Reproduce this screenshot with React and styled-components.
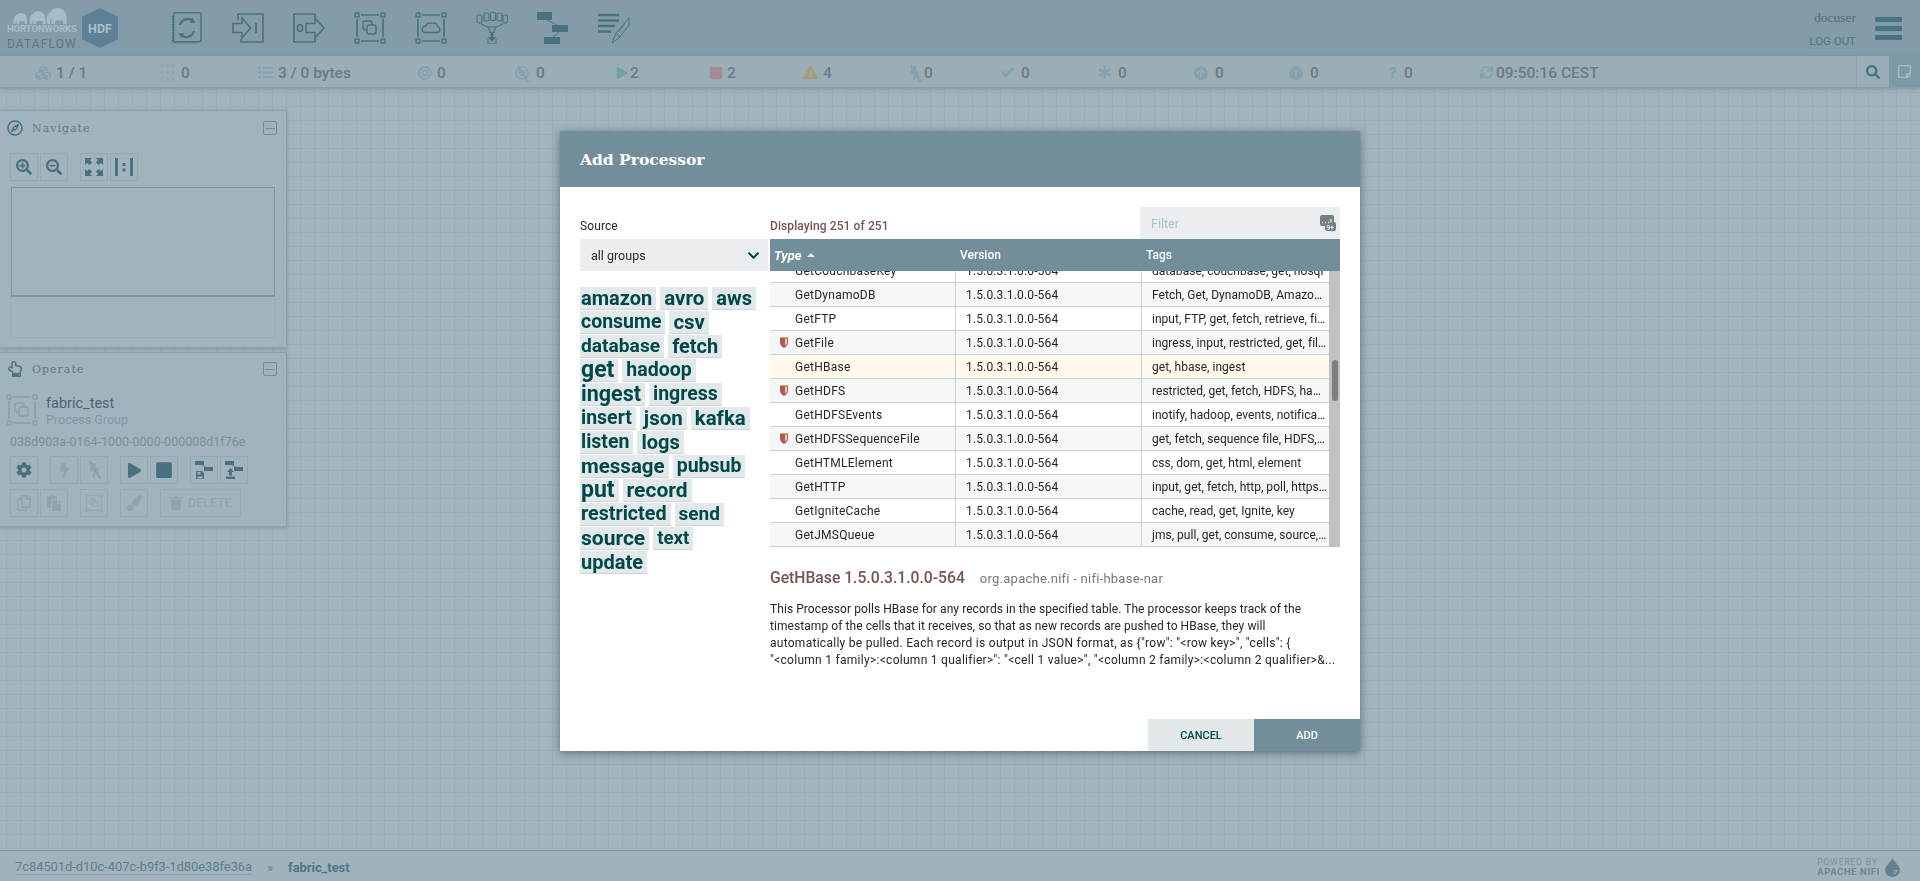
import React from "react";
import styled, { createGlobalStyle } from "styled-components";
import {
  FaCubes, FaList, FaBullseye, FaPlay, FaStop, FaExclamationTriangle, FaBolt, FaCheck, FaAsterisk,
  FaArrowCircleUp, FaExclamationCircle, FaQuestion, FaSync, FaSearch, FaCog, FaPaintBrush, FaTrash,
  FaRegCopy, FaPaste, FaSearchPlus, FaSearchMinus, FaRegCompass, FaRegHandPointUp, FaChevronDown,
  FaRegStickyNote,
} from "react-icons/fa";

const Global = createGlobalStyle`
  html, body { margin: 0; padding: 0; height: 100%; overflow: hidden; }
  body { font-family: Roboto, "Liberation Sans", sans-serif; background: #a2b4be; }
  * { box-sizing: border-box; }
`;

const Page = styled.div`
  height: 881px;
  display: flex;
  flex-direction: column;
`;

/* top header */
const Header = styled.header`
  height: 56px;
  background: #849ca9;
  display: flex;
  align-items: center;
  padding: 0 18px 0 7px;
  flex-shrink: 0;
`;
const Logo = styled.div`
  width: 164px;
  height: 56px;
  display: flex;
  gap: 7px;
  align-items: center;
`;
const LogoWords = styled.div`
  width: 68px;
  display: flex;
  flex-direction: column;
  align-items: flex-start;
  padding-top: 2px;
`;
const Hortonworks = styled.span`
  font-size: 9.5px;
  line-height: 10px;
  font-weight: 700;
  color: #a9bcc6;
  letter-spacing: -0.1px;
  white-space: nowrap;
`;
const Dataflow = styled.span`
  font-size: 12px;
  line-height: 14px;
  margin-top: 3px;
  color: #5f7684;
  letter-spacing: 1.1px;
`;
const ToolIcons = styled.div`
  display: flex;
  gap: 29px;
  color: #49727e;
  flex: 1;
`;
const ToolIcon = styled.svg`
  width: 32px;
  height: 32px;
  display: block;
`;
const UserBox = styled.div`
  display: flex;
  flex-direction: column;
  align-items: flex-end;
  margin-right: 19px;
  margin-top: 2px;
`;
const UserName = styled.span`
  font-family: "Liberation Serif", serif;
  font-size: 13.5px;
  line-height: 16px;
  color: #5a6d78;
`;
const LogOut = styled.span`
  font-size: 11.5px;
  line-height: 14px;
  margin-top: 8px;
  color: #4f7682;
  border-bottom: 1px solid #7d97a3;
`;
const Burger = styled.div`
  width: 27px;
  height: 23px;
  display: flex;
  flex-direction: column;
  justify-content: space-between;
  span {
    display: block;
    height: 5px;
    border-radius: 1px;
    background: #49727e;
  }
`;

/* status bar */
const StatusBar = styled.div`
  height: 32px;
  background: #9aaeb8;
  border-bottom: 1px solid #879eaa;
  box-shadow: 0 1px 4px rgba(60, 85, 100, 0.3);
  display: flex;
  align-items: center;
  padding-left: 35px;
  flex-shrink: 0;
  position: relative;
  z-index: 1;
`;
const Stat = styled.div`
  width: ${(p) => p.$w}px;
  display: flex;
  align-items: center;
  padding-top: 2px;
  font-size: 15.5px;
  font-weight: 500;
  color: #6d7a85;
  white-space: nowrap;
`;
const StatIcon = styled.span`
  width: ${(p) => p.$w}px;
  display: flex;
  color: ${(p) => p.$color || "#86a0ad"};
  position: relative;
  font-size: ${(p) => p.$size || 15}px;
`;
const Slash = styled.i`
  position: absolute;
  left: ${(p) => p.$left || 7}px;
  top: ${(p) => p.$top || -2}px;
  width: 1.5px;
  height: 20px;
  background: #86a0ad;
  transform: rotate(-32deg);
`;
const StatusRight = styled.div`
  margin-left: auto;
  height: 31px;
  display: flex;
`;
const SearchBtn = styled.div`
  width: 33px;
  border-left: 1px solid #8ba2ae;
  display: flex;
  align-items: center;
  justify-content: center;
  color: #49727e;
  font-size: 14px;
`;
const NoteBtn = styled.div`
  width: 31px;
  background: #7f98a5;
  display: flex;
  align-items: center;
  justify-content: center;
  color: #a8bac4;
  font-size: 15px;
`;

/* canvas with the floating palettes */
const Canvas = styled.main`
  flex: 1;
  background-color: #a2b4be;
  background-image:
    linear-gradient(#9aadb7 1px, transparent 1px),
    linear-gradient(90deg, #9aadb7 1px, transparent 1px);
  background-size: 14px 14px;
  background-position: 6px 4px;
  padding-top: 22px;
  display: flex;
  flex-direction: column;
  gap: 4px;
`;
const Palette = styled.section`
  width: 287px;
  height: ${(p) => p.$h}px;
  background: #a1b3bd;
  border: 1px solid #8ba2ae;
  border-left: 0;
  box-shadow: 0 1px 3px rgba(60, 85, 100, 0.3);
  padding: 0 10px;
`;
const PaletteHead = styled.div`
  height: ${(p) => p.$h}px;
  margin: 0 -1px ${(p) => 42 - p.$h}px -3px;
  display: flex;
  align-items: center;
  color: #4b7480;
  font-size: 16px;
`;
const PaletteTitle = styled.span`
  font-family: "DejaVu Serif", serif;
  font-size: 11px;
  letter-spacing: 1px;
  color: #65798a;
  margin-left: 9px;
  flex: 1;
`;
const Collapse = styled.span`
  width: 14px;
  height: 14px;
  border: 1px solid #6f8e9c;
  border-radius: 2px;
  display: flex;
  align-items: center;
  justify-content: center;
  &::after {
    content: "";
    width: 10px;
    height: 1px;
    background: #6f8e9c;
  }
`;
const BtnRow = styled.div`
  display: flex;
  gap: 12px;
  margin-top: ${(p) => p.$mt || 0}px;
`;
const BtnGroup = styled.div`
  display: flex;
  gap: 2px;
`;
const CtlBtn = styled.div`
  min-width: 28px;
  height: 28px;
  padding: ${(p) => (p.$wide ? "0 8px" : "0")};
  border: 1px solid #94a9b4;
  display: flex;
  align-items: center;
  justify-content: center;
  gap: 5px;
  position: relative;
  color: ${(p) => (p.$off ? "#8ea4af" : "#49727e")};
  font-size: ${(p) => p.$size || 15}px;
`;
const DeleteLabel = styled.span`
  font-size: 12px;
  color: #8ea4af;
  letter-spacing: 0.3px;
`;
const BirdsEye = styled.div`
  width: 264px;
  height: 110px;
  margin: 6px 0 0 1px;
  border: 1px solid #7b98a6;
  border-bottom-width: 2px;
`;
const BirdsFoot = styled.div`
  width: 266px;
  height: 41px;
  border: 1px solid #99adb7;
  border-top: 0;
`;
const Selection = styled.div`
  display: flex;
  gap: 8px;
  margin: -1px 0 0 -4px;
  color: #8f9ea7;
`;
const SelectionName = styled.div`
  font-size: 14.5px;
  line-height: 16px;
  margin-top: 2px;
  color: #4f6472;
`;
const SelectionType = styled.div`
  font-size: 12.5px;
  line-height: 16px;
  color: #7f98a5;
`;
const SelectionId = styled.div`
  font-size: 12.5px;
  line-height: 16px;
  margin: 6px 0 6px;
  color: #7d8f9a;
  white-space: nowrap;
`;

/* footer */
const Footer = styled.footer`
  height: 31px;
  background: #a0b3bd;
  border-top: 1px solid #859da9;
  display: flex;
  align-items: center;
  padding: 2px 20px 0 15px;
  font-size: 12.85px;
  color: #4f7682;
  flex-shrink: 0;
`;
const Crumb = styled.span`
  border-bottom: 1px solid #8ba2ae;
  color: #5c7f8b;
`;
const CrumbSep = styled.span`
  margin: 0 15px;
  color: #5c7f8b;
`;
const CrumbNow = styled.b`
  font-weight: 700;
  color: #4f7682;
`;
const Powered = styled.div`
  margin-left: auto;
  display: flex;
  align-items: center;
  gap: 5px;
  color: #7d909b;
`;
const PoweredText = styled.div`
  font-size: 8.5px;
  line-height: 9px;
  letter-spacing: 0.9px;
  white-space: nowrap;
  b {
    display: block;
    font-size: 9.5px;
    letter-spacing: 0.6px;
    color: #73858f;
  }
`;

/* dialog */
const Glass = styled.div`
  position: fixed;
  inset: 0;
  z-index: 5;
  display: flex;
  align-items: center;
  justify-content: center;
`;
const Dialog = styled.div`
  width: 800px;
  height: 620px;
  background: #fff;
  box-shadow: 0 2px 8px rgba(30, 50, 60, 0.55);
  display: flex;
  flex-direction: column;
`;
const DialogHead = styled.div`
  height: 56px;
  background: #728e9b;
  color: #fff;
  font-family: "DejaVu Serif", serif;
  font-weight: 700;
  font-size: 15.5px;
  display: flex;
  align-items: center;
  padding: 2px 0 0 20px;
  flex-shrink: 0;
`;
const DialogBody = styled.div`
  flex: 1;
  display: flex;
  gap: 2px;
  padding: 20px 20px 0;
`;
const LeftCol = styled.div`
  width: 188px;
`;
const SourceLabel = styled.div`
  height: 32px;
  display: flex;
  align-items: flex-end;
  padding-bottom: 6px;
  font-size: 12px;
  letter-spacing: 0.1px;
  color: #262626;
`;
const SelectBox = styled.div`
  height: 32px;
  background: #eaeef0;
  display: flex;
  align-items: center;
  justify-content: space-between;
  padding: 1px 8px 0 11px;
  font-size: 12.5px;
  color: #262626;
  svg { color: #004849; font-size: 13px; }
`;
const Cloud = styled.div`
  margin-top: 16px;
  height: 287px;
  overflow: hidden;
`;
const CloudRow = styled.div`
  height: 24px;
  display: flex;
  gap: 4px;
  align-items: flex-start;
`;
const Tag = styled.span`
  height: 23px;
  padding: 0 4px;
  background: #e3e8eb;
  border-bottom: 1px solid #ccd5da;
  color: #004849;
  font-weight: 700;
  font-size: ${(p) => p.$size}px;
  line-height: 22px;
  white-space: nowrap;
  &:first-child { padding-left: 1px; }
`;
const RightCol = styled.div`
  width: 570px;
`;
const TopLine = styled.div`
  height: 32px;
  display: flex;
  justify-content: space-between;
`;
const Displaying = styled.div`
  align-self: flex-end;
  padding-bottom: 6px;
  font-size: 12px;
  font-weight: 500;
  letter-spacing: 0.1px;
  color: #775351;
`;
const Filter = styled.div`
  width: 200px;
  background: #eaeef0;
  display: flex;
  align-items: center;
  justify-content: space-between;
  padding: 1px 4px 0 11px;
  font-size: 12.5px;
  color: #b2c1c8;
`;
const HeadRow = styled.div`
  height: 32px;
  padding-top: 1px;
  background: #728e9b;
  color: #fff;
  display: grid;
  grid-template-columns: 186px 186px 1fr;
  align-items: center;
  font-size: 12px;
  font-weight: 500;
`;
const HeadCell = styled.div`
  padding-left: ${(p) => p.$pl}px;
  font-style: ${(p) => (p.$sorted ? "italic" : "normal")};
  font-weight: ${(p) => (p.$sorted ? 700 : 500)};
  font-size: ${(p) => (p.$sorted ? 13 : 12)}px;
  display: flex;
  align-items: center;
  gap: 5px;
`;
const SortUp = styled.i`
  width: 0;
  height: 0;
  border: 4px solid transparent;
  border-top: 0;
  border-bottom: 4px solid #e3e8eb;
`;
const TableView = styled.div`
  height: 276px;
  display: flex;
  overflow: hidden;
`;
const Rows = styled.div`
  flex: 1;
  margin-top: -12px;
`;
const Row = styled.div`
  height: 24px;
  display: grid;
  grid-template-columns: 186px 186px 1fr;
  border-bottom: 1px solid #c7d2d7;
  background: ${(p) => (p.$sel ? "#fffaeb" : p.$alt ? "#f4f6f7" : "#fff")};
  font-size: 12px;
  line-height: 24px;
  color: #262626;
`;
const Cell = styled.div`
  padding-left: ${(p) => p.$pl}px;
  border-right: ${(p) => (p.$last ? "0" : "1px solid #c7d2d7")};
  letter-spacing: ${(p) => p.$ls}px;
  white-space: nowrap;
  overflow: hidden;
  text-overflow: ellipsis;
  position: relative;
  padding-right: ${(p) => (p.$last ? "2px" : "0")};
`;
const Shield = styled.svg`
  position: absolute;
  left: 10px;
  top: 6px;
  width: 8px;
  height: 11px;
`;
const ScrollTrack = styled.div`
  width: 11px;
  background: #c1c1c1;
  padding: 89px 2px 0 3px;
`;
const ScrollThumb = styled.div`
  height: 41px;
  background: #7f7f7f;
  border-radius: 3px;
`;
const DetailHead = styled.div`
  margin-top: 21px;
  display: flex;
  align-items: baseline;
  gap: 15px;
`;
const DetailName = styled.span`
  font-size: 15.7px;
  font-weight: 500;
  color: #775351;
`;
const DetailBundle = styled.span`
  font-size: 13px;
  letter-spacing: 0.25px;
  color: #777;
`;
const Description = styled.div`
  margin-top: 14px;
  font-size: 12px;
  line-height: 17px;
  color: #262626;
`;
const DescLine = styled.div`
  white-space: nowrap;
  letter-spacing: ${(p) => p.$ls}px;
`;
const DialogFoot = styled.div`
  height: 32px;
  display: flex;
  justify-content: flex-end;
  flex-shrink: 0;
`;
const FootBtn = styled.div`
  width: 106px;
  padding-top: 2px;
  display: flex;
  align-items: center;
  justify-content: center;
  font-size: 11px;
  font-weight: 500;
  background: ${(p) => (p.$primary ? "#728e9b" : "#e3e8eb")};
  color: ${(p) => (p.$primary ? "#fff" : "#004849")};
`;

/* drawn icons */
const PgInner = ({ cloud, bg = "none" }) => (
  <g fill="none" stroke="currentColor" strokeWidth="1.4">
    <rect x="1" y="1" width="4" height="4" rx="0.8" />
    <rect x="27" y="1" width="4" height="4" rx="0.8" />
    <rect x="1" y="27" width="4" height="4" rx="0.8" />
    <rect x="27" y="27" width="4" height="4" rx="0.8" />
    <path d="M7 3h18M7 29h18M3 7v18M29 7v18" strokeWidth="1.7" />
    {cloud ? (
      <path d="M10 20.5h12a3 3 0 0 0 .6-5.9 4 4 0 0 0-5.8-3.2A4.4 4.4 0 0 0 10.5 14.3 3.1 3.1 0 0 0 10 20.5z" />
    ) : (
      <>
        <rect x="9" y="9" width="9" height="9" rx="2" />
        <rect x="13" y="13" width="9" height="9" rx="2" fill={bg} />
      </>
    )}
  </g>
);

const ProcessorIcon = () => (
  <ToolIcon viewBox="0 0 32 32" fill="none" stroke="currentColor">
    <rect x="2.5" y="0.8" width="27.5" height="29" rx="2" strokeWidth="1.5" />
    <path d="M1.5 4v27h26" strokeWidth="1.2" strokeDasharray="1.5 1.2" />
    <path d="M9 13a8 8 0 0 1 13-4" strokeWidth="2.2" />
    <path d="M23 19a8 8 0 0 1-13 4" strokeWidth="2.2" />
    <path d="M21 5.5l3.5 5-5.5.5zM11 26.5l-3.5-5 5.5-.5z" fill="currentColor" stroke="none" />
  </ToolIcon>
);
const InputPortIcon = () => (
  <ToolIcon viewBox="0 0 32 32" fill="none" stroke="currentColor" strokeWidth="1.6">
    <path d="M6 8V2h25v28H9v-3" />
    <path d="M1 11.5h9V6l8.5 10L10 26v-5.5H1z" />
    <path d="M24 11v10" strokeWidth="1.8" />
  </ToolIcon>
);
const OutputPortIcon = () => (
  <ToolIcon viewBox="0 0 32 32" fill="none" stroke="currentColor" strokeWidth="1.6">
    <path d="M22 7V2H1v28h21v-4" />
    <ellipse cx="7" cy="16" rx="2.5" ry="3.5" />
    <path d="M13 11.5h9V6l9 10-9 10v-5.5h-9z" />
  </ToolIcon>
);
const PgIcon = () => (
  <ToolIcon viewBox="0 0 32 32"><PgInner bg="#849ca9" /></ToolIcon>
);
const RpgIcon = () => (
  <ToolIcon viewBox="0 0 32 32"><PgInner cloud /></ToolIcon>
);
const FunnelIcon = () => (
  <ToolIcon viewBox="0 0 32 32" fill="none" stroke="currentColor" strokeWidth="1.1">
    <rect x="1" y="3" width="5" height="8" rx="1.5" />
    <rect x="8" y="1" width="5" height="8" rx="1.5" />
    <rect x="14.5" y="0.5" width="5" height="8" rx="1.5" />
    <rect x="21" y="1" width="5" height="8" rx="1.5" />
    <rect x="27" y="3" width="4.5" height="8" rx="1.5" />
    <path d="M5 12l7 3h8l7-3M11 14.5l3 4v2h4v-2l3-4" />
    <path d="M14.5 20v5H12l4 5 4-5h-2.5v-5z" fill="currentColor" stroke="none" />
    <path d="M12 27v5h8v-5" />
  </ToolIcon>
);
const TemplateIcon = () => (
  <ToolIcon viewBox="0 0 32 32">
    <path d="M10 8l10 5M22 20l-6 5" stroke="currentColor" strokeWidth="0.9" fill="none" />
    <rect x="0" y="0" width="15" height="8" fill="currentColor" />
    <rect x="15" y="13" width="16" height="7" fill="currentColor" />
    <rect x="7" y="25" width="16" height="7" fill="currentColor" />
  </ToolIcon>
);
const LabelIcon = () => (
  <ToolIcon viewBox="0 0 32 32" fill="none" stroke="currentColor">
    <path d="M0 3h21M0 8.5h21M0 14h17M0 19.5h13" strokeWidth="2.4" />
    <path d="M31 6L18 21l-4 10 7-5 10-13zM19 22l3 3" strokeWidth="1" />
    <path d="M27 11L21 20" strokeWidth="0.8" />
  </ToolIcon>
);

const ELEPHANT = "M1 17c-1-5 0-10 4-12 1-2 4-3 6-3 5 0 9 4 9 9v7h-3l-.5-4H9l-.5 4h-3l-.3-6c-1 1-1.5 3-1.2 6z";
const Elephants = () => (
  <svg width="56" height="17" viewBox="0 0 56 17" fill="#a9bcc6" style={{ marginLeft: 6, display: "block" }}>
    <path d={ELEPHANT} transform="translate(0 4.5) scale(0.7)" />
    <path d={ELEPHANT} transform="translate(16 2.5) scale(0.82)" />
    <path d={ELEPHANT} transform="translate(33 -1) scale(1.03)" />
  </svg>
);
const HdfHex = styled.div`
  width: 36px;
  height: 40px;
  background: #5f8097;
  clip-path: polygon(50% 0, 100% 22%, 100% 78%, 50% 100%, 0 78%, 0 22%);
  display: flex;
  align-items: center;
  justify-content: center;
  color: #a9bfca;
  font-weight: 700;
  font-size: 12.5px;
`;

const RegexIcon = () => (
  <svg width="16" height="16" viewBox="0 0 16 16">
    <rect x="0" y="0" width="14" height="11" rx="2" fill="#728081" />
    <rect x="5" y="7" width="11" height="9" rx="2" fill="#728081" />
    <path d="M2 7.5h1M5 7.5h1M8 7.5h1M11 4v3.5" stroke="#eaeef0" strokeWidth="1.3" />
    <text x="6.5" y="14.5" fontSize="6.5" fontWeight="700" fontFamily="Roboto" fill="#eaeef0">9+</text>
  </svg>
);
const ShieldIcon = () => (
  <Shield viewBox="0 0 8 11">
    <path d="M0 .5h8v5C8 8 6 10 4 11 2 10 0 8 0 5.5z" fill="#ba554a" />
    <path d="M5.3 1.5h1.4v4c0 1.3-.7 2.5-1.9 3.4.4-1.1.5-2.2.5-3.4z" fill="#fff" />
  </Shield>
);
const DropIcon = () => (
  <svg width="15" height="19" viewBox="0 0 15 19">
    <path d="M7.5 0c1 3 7.5 8 7.5 12a7.5 7 0 0 1-15 0C0 8 6.5 3 7.5 0z" fill="#66808f" />
    <path d="M9 12h1.5v1.5H9zM11 12h1.5v1.5H11zM9 14.5h1.5V16H9z" fill="#a0b3bd" />
  </svg>
);
const FitIcon = () => (
  <svg width="18" height="18" viewBox="0 0 18 18" fill="currentColor">
    <path d="M0 0h7L5 2 7 4.5 4.5 7 2 5 0 7zM18 0h-7l2 2-2 2.5L13.5 7 16 5l2 2zM0 18h7l-2-2 2-2.5L4.5 11 2 13l-2-2zM18 18h-7l2-2-2-2.5 2.5-2.5 2.5 2 2-2z" />
  </svg>
);
const ActualIcon = () => (
  <svg width="18" height="18" viewBox="0 0 18 18" fill="currentColor">
    <path d="M0 0h3v18H0zM15 0h3v18h-3zM7.5 5h3v3h-3zM7.5 10.5h3v3h-3z" />
  </svg>
);
const SmallFlowIcon = ({ children }) => (
  <svg width="18" height="18" viewBox="0 0 18 18" fill="currentColor">
    <rect x="0" y="0" width="9" height="4" />
    <rect x="9" y="6" width="9" height="4" />
    <path d="M5 3l8 4" stroke="currentColor" strokeWidth="0.7" />
    {children}
  </svg>
);
const TemplateSaveIcon = () => (
  <SmallFlowIcon>
    <path d="M1 10h6l2 2v6H1zM2.5 11v2.5h3V11zM2.5 15.5v2h5v-2z" fillRule="evenodd" />
  </SmallFlowIcon>
);
const TemplateUploadIcon = () => (
  <SmallFlowIcon>
    <path d="M5.5 7L9 11H7v3.5H4V11H2zM1 15.5h9V18H1z" />
  </SmallFlowIcon>
);

const stats = [
  { w: 125, iw: 21, icon: <FaCubes />, text: "1 / 1", size: 16 },
  { w: 98, iw: 21, text: "0", dots: true },
  { w: 160, iw: 20, icon: <FaList />, text: "3 / 0 bytes" },
  { w: 97, iw: 19, icon: <FaBullseye />, text: "0", size: 14 },
  { w: 101, iw: 21, icon: <FaBullseye />, text: "0", size: 14, slash: true },
  { w: 93, iw: 14, icon: <FaPlay />, text: "2", color: "#6fa39b", size: 12 },
  { w: 94, iw: 18, icon: <FaStop />, text: "2", color: "#a58a98", size: 14 },
  { w: 105, iw: 20, icon: <FaExclamationTriangle />, text: "4", color: "#a79f7a" },
  { w: 93, iw: 16, icon: <FaBolt />, text: "0", size: 14, slash: true },
  { w: 97, iw: 20, icon: <FaCheck />, text: "0", size: 13 },
  { w: 96, iw: 20, icon: <FaAsterisk />, text: "0", size: 13 },
  { w: 95, iw: 21, icon: <FaArrowCircleUp />, text: "0", size: 14 },
  { w: 98, iw: 21, icon: <FaExclamationCircle />, text: "0", size: 14 },
  { w: 93, iw: 17, icon: <FaQuestion />, text: "0", size: 11 },
  { w: 200, iw: 16, icon: <FaSync />, text: "09:50:16 CEST", size: 13 },
];

const tagLines = [
  [["amazon", 20], ["avro", 20.5], ["aws", 20]],
  [["consume", 19.5], ["csv", 20.4]],
  [["database", 19.2], ["fetch", 20]],
  [["get", 23], ["hadoop", 19.5]],
  [["ingest", 21.5], ["ingress", 19.5]],
  [["insert", 19.5], ["json", 20.5], ["kafka", 20.4]],
  [["listen", 19.5], ["logs", 20]],
  [["message", 20.5], ["pubsub", 19.5]],
  [["put", 23], ["record", 21]],
  [["restricted", 19.7], ["send", 19]],
  [["source", 21], ["text", 18.7]],
  [["update", 20]],
];

const V = "1.5.0.3.1.0.0-564";
const rows = [
  { name: "GetCouchbaseKey", tags: "database, couchbase, get, nosql" },
  { name: "GetDynamoDB", tags: "Fetch, Get, DynamoDB, Amazon, AWS" },
  { name: "GetFTP", tags: "input, FTP, get, fetch, retrieve, files, ingest" },
  { name: "GetFile", tags: "ingress, input, restricted, get, files, filesystem", shield: true },
  { name: "GetHBase", tags: "get, hbase, ingest", sel: true },
  { name: "GetHDFS", tags: "restricted, get, fetch, HDFS, hadoop, ingest", shield: true },
  { name: "GetHDFSEvents", tags: "inotify, hadoop, events, notifications, hdfs" },
  { name: "GetHDFSSequenceFile", tags: "get, fetch, sequence file, HDFS, hadoop", shield: true },
  { name: "GetHTMLElement", tags: "css, dom, get, html, element" },
  { name: "GetHTTP", tags: "input, get, fetch, http, poll, https, ingest" },
  { name: "GetIgniteCache", tags: "cache, read, get, Ignite, key" },
  { name: "GetJMSQueue", tags: "jms, pull, get, consume, source, message" },
];

const App = () => {
  return (
    <Page>
      <Global />
      <Header>
        <Logo>
          <LogoWords>
            <Elephants />
            <Hortonworks>HORTONWORKS</Hortonworks>
            <Dataflow>DATAFLOW</Dataflow>
          </LogoWords>
          <HdfHex>HDF</HdfHex>
        </Logo>
        <ToolIcons>
          <ProcessorIcon />
          <InputPortIcon />
          <OutputPortIcon />
          <PgIcon />
          <RpgIcon />
          <FunnelIcon />
          <TemplateIcon />
          <LabelIcon />
        </ToolIcons>
        <UserBox>
          <UserName>docuser</UserName>
          <LogOut>LOG OUT</LogOut>
        </UserBox>
        <Burger><span /><span /><span /></Burger>
      </Header>

      <StatusBar>
        {stats.map((s, i) => (
          <Stat key={i} $w={s.w}>
            <StatIcon $w={s.iw} $color={s.color} $size={s.size}>
              {s.dots ? (
                <svg width="15" height="17" viewBox="0 0 15 17" fill="#8fa6b2">
                  {[2, 8.5, 15].map((y) => [2, 7.5, 13].map((x) => <circle key={x + "-" + y} cx={x} cy={y} r="2" />))}
                </svg>
              ) : s.icon}
              {s.slash && <Slash />}
            </StatIcon>
            {s.text}
          </Stat>
        ))}
        <StatusRight>
          <SearchBtn><FaSearch /></SearchBtn>
          <NoteBtn><FaRegStickyNote /></NoteBtn>
        </StatusRight>
      </StatusBar>

      <Canvas>
        <Palette $h={238}>
          <PaletteHead $h={34}>
            <FaRegCompass />
            <PaletteTitle>Navigate</PaletteTitle>
            <Collapse />
          </PaletteHead>
          <BtnRow>
            <BtnGroup>
              <CtlBtn $size={16}><FaSearchPlus /></CtlBtn>
              <CtlBtn $size={16}><FaSearchMinus /></CtlBtn>
            </BtnGroup>
            <BtnGroup>
              <CtlBtn><FitIcon /></CtlBtn>
              <CtlBtn><ActualIcon /></CtlBtn>
            </BtnGroup>
          </BtnRow>
          <BirdsEye />
          <BirdsFoot />
        </Palette>
        <Palette $h={175}>
          <PaletteHead $h={32}>
            <FaRegHandPointUp />
            <PaletteTitle>Operate</PaletteTitle>
            <Collapse />
          </PaletteHead>
          <Selection>
            <ToolIcon viewBox="0 0 32 32"><PgInner bg="#a1b3bd" /></ToolIcon>
            <div>
              <SelectionName>fabric_test</SelectionName>
              <SelectionType>Process Group</SelectionType>
            </div>
          </Selection>
          <SelectionId>038d903a-0164-1000-0000-000008d1f76e</SelectionId>
          <BtnRow>
            <CtlBtn $size={16}><FaCog /></CtlBtn>
            <BtnGroup>
              <CtlBtn $off><FaBolt /></CtlBtn>
              <CtlBtn $off><FaBolt /><Slash $left={13} $top={3} /></CtlBtn>
            </BtnGroup>
            <BtnGroup>
              <CtlBtn><FaPlay /></CtlBtn>
              <CtlBtn $size={18}><FaStop /></CtlBtn>
            </BtnGroup>
            <BtnGroup>
              <CtlBtn><TemplateSaveIcon /></CtlBtn>
              <CtlBtn><TemplateUploadIcon /></CtlBtn>
            </BtnGroup>
          </BtnRow>
          <BtnRow $mt={5}>
            <BtnGroup>
              <CtlBtn $off $size={16}><FaRegCopy /></CtlBtn>
              <CtlBtn $off $size={16}><FaPaste /></CtlBtn>
            </BtnGroup>
            <CtlBtn $off>
              <svg width="18" height="18" viewBox="0 0 32 32"><PgInner bg="#a1b3bd" /></svg>
            </CtlBtn>
            <CtlBtn $off $size={16}><FaPaintBrush /></CtlBtn>
            <CtlBtn $off $wide $size={14}><FaTrash /><DeleteLabel>DELETE</DeleteLabel></CtlBtn>
          </BtnRow>
        </Palette>
      </Canvas>

      <Footer>
        <Crumb>7c84501d-d10c-407c-b9f3-1d80e38fe36a</Crumb>
        <CrumbSep>»</CrumbSep>
        <CrumbNow>fabric_test</CrumbNow>
        <Powered>
          <PoweredText>POWERED BY<b>APACHE NIFI</b></PoweredText>
          <DropIcon />
        </Powered>
      </Footer>

      <Glass>
        <Dialog>
          <DialogHead>Add Processor</DialogHead>
          <DialogBody>
            <LeftCol>
              <SourceLabel>Source</SourceLabel>
              <SelectBox>all groups <FaChevronDown /></SelectBox>
              <Cloud>
                {tagLines.map((line, i) => (
                  <CloudRow key={i}>
                    {line.map(([t, size]) => <Tag key={t} $size={size}>{t}</Tag>)}
                  </CloudRow>
                ))}
              </Cloud>
            </LeftCol>
            <RightCol>
              <TopLine>
                <Displaying>Displaying 251 of 251</Displaying>
                <Filter>Filter <RegexIcon /></Filter>
              </TopLine>
              <HeadRow>
                <HeadCell $pl={4} $sorted>Type <SortUp /></HeadCell>
                <HeadCell $pl={4}>Version</HeadCell>
                <HeadCell $pl={4}>Tags</HeadCell>
              </HeadRow>
              <TableView>
                <Rows>
                  {rows.map((r, i) => (
                    <Row key={r.name} $alt={i % 2 === 1} $sel={r.sel}>
                      <Cell $pl={25} $ls={0.25}>{r.shield && <ShieldIcon />}{r.name}</Cell>
                      <Cell $pl={10} $ls={0.15}>{V}</Cell>
                      <Cell $pl={10} $ls={0.03} $last>{r.tags}</Cell>
                    </Row>
                  ))}
                </Rows>
                <ScrollTrack><ScrollThumb /></ScrollTrack>
              </TableView>
              <DetailHead>
                <DetailName>GetHBase 1.5.0.3.1.0.0-564</DetailName>
                <DetailBundle>org.apache.nifi - nifi-hbase-nar</DetailBundle>
              </DetailHead>
              <Description>
                <DescLine $ls={0.07}>This Processor polls HBase for any records in the specified table. The processor keeps track of the</DescLine>
                <DescLine $ls={0.07}>timestamp of the cells that it receives, so that as new records are pushed to HBase, they will</DescLine>
                <DescLine $ls={0.27}>automatically be pulled. Each record is output in JSON format, as {"{"}"row": "&lt;row key&gt;", "cells": {"{"}</DescLine>
                <DescLine $ls={0.28}>"&lt;column 1 family&gt;:&lt;column 1 qualifier&gt;": "&lt;cell 1 value&gt;", "&lt;column 2 family&gt;:&lt;column 2 qualifier&gt;&amp;...</DescLine>
              </Description>
            </RightCol>
          </DialogBody>
          <DialogFoot>
            <FootBtn>CANCEL</FootBtn>
            <FootBtn $primary>ADD</FootBtn>
          </DialogFoot>
        </Dialog>
      </Glass>
    </Page>
  );
};

export default App;
